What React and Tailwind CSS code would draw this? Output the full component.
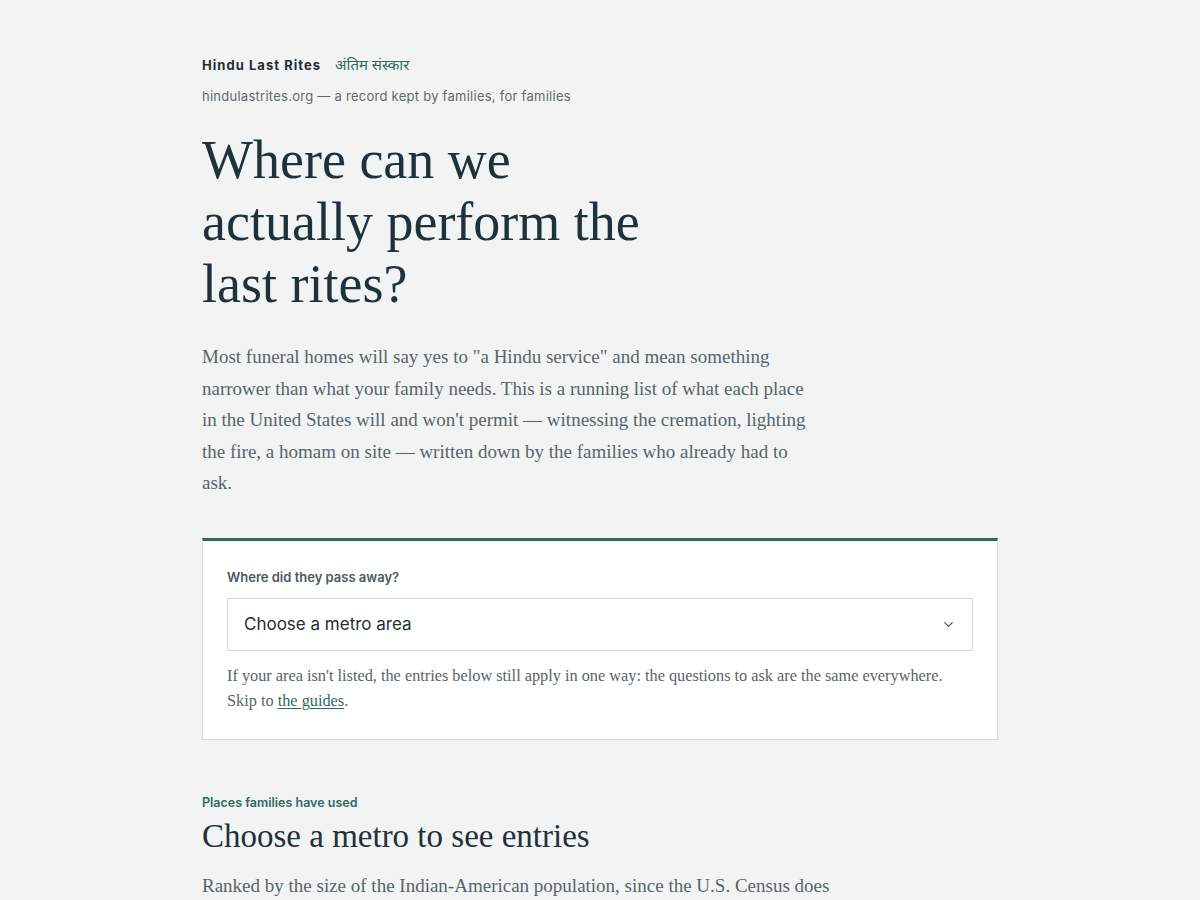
import { ChevronDown } from 'lucide-react';

const serif = { fontFamily: '"Liberation Serif", "DejaVu Serif", serif' };
const sans = { fontFamily: 'Inter, "Noto Sans", sans-serif' };

const Masthead = () => (
    <header className="pt-[53px]">
        <div className="flex items-baseline gap-[14px]">
            <span className="text-[13px] font-bold tracking-[0.08em] text-[#1f2d35]">Hindu Last Rites</span>
            <span className="text-[15px] text-[#2e6a5f]" style={{ fontFamily: '"Noto Sans", "Noto Sans Devanagari", sans-serif' }}>अंतिम संस्कार</span>
        </div>
        <p className="mt-[11px] text-[13px] tracking-[0.02em] text-[#5d6970]">
            hindulastrites.org — a record kept by families, for families
        </p>
    </header>
);

const MetroPicker = () => (
    <section className="mt-[39px] border border-[#d6dadb] border-t-[3px] border-t-[#2e6a5f] bg-white px-[24px] pt-[27px] pb-[26px]">
        <label className="block text-[13px] font-semibold text-[#4c5961]" style={sans}>Where did they pass away?</label>
        <div className="mt-[11px] flex h-[53px] items-center justify-between border border-[#d3d7d8] bg-white pl-[16px] pr-[16px]">
            <span className="text-[17px] text-[#1f2d35]" style={sans}>Choose a metro area</span>
            <ChevronDown size={15} strokeWidth={2} className="text-[#4c5961]" />
        </div>
        <p className="mt-[12px] text-[16.3px] leading-[25px] text-[#56646c]" style={serif}>
            If your area isn't listed, the entries below still apply in one way: the questions to ask are the same everywhere.
            Skip to{' '}
            <a href="#guides" className="text-[#2e6a5f] underline underline-offset-2">the guides</a>.
        </p>
    </section>
);

const Entries = () => (
    <section className="mt-[54px]">
        <p className="text-[12.5px] font-semibold text-[#2e6a5f]" style={sans}>Places families have used</p>
        <h2 className="mt-[3px] text-[33px] leading-[40px] text-[#1f313b]" style={serif}>Choose a metro to see entries</h2>
        <p className="mt-[14px] max-w-[650px] text-[19px] leading-[31.5px] text-[#56646c]" style={serif}>
            Ranked by the size of the Indian-American population, since the U.S. Census does
            not track religion, and Hindu families are spread unevenly across the country.
        </p>
    </section>
);

export default function App() {
    return (
        <div className="min-h-screen bg-[#f2f4f3]" style={sans}>
            <main className="mx-auto max-w-[796px] pb-20">
                <Masthead />
                <h1 className="mt-[23px] text-[54px] leading-[62px] text-[#1f313b]" style={serif}>
                    Where can we<br />
                    actually perform the<br />
                    last rites?
                </h1>
                <p className="mt-[26px] max-w-[620px] text-[19px] leading-[31.5px] text-[#56646c]" style={serif}>
                    Most funeral homes will say yes to "a Hindu service" and mean something narrower than what your
                    family needs. This is a running list of what each place in the United States will and won't
                    permit — witnessing the cremation, lighting the fire, a homam on site — written down by the
                    families who already had to ask.
                </p>
                <MetroPicker />
                <Entries />
            </main>
        </div>
    );
}
